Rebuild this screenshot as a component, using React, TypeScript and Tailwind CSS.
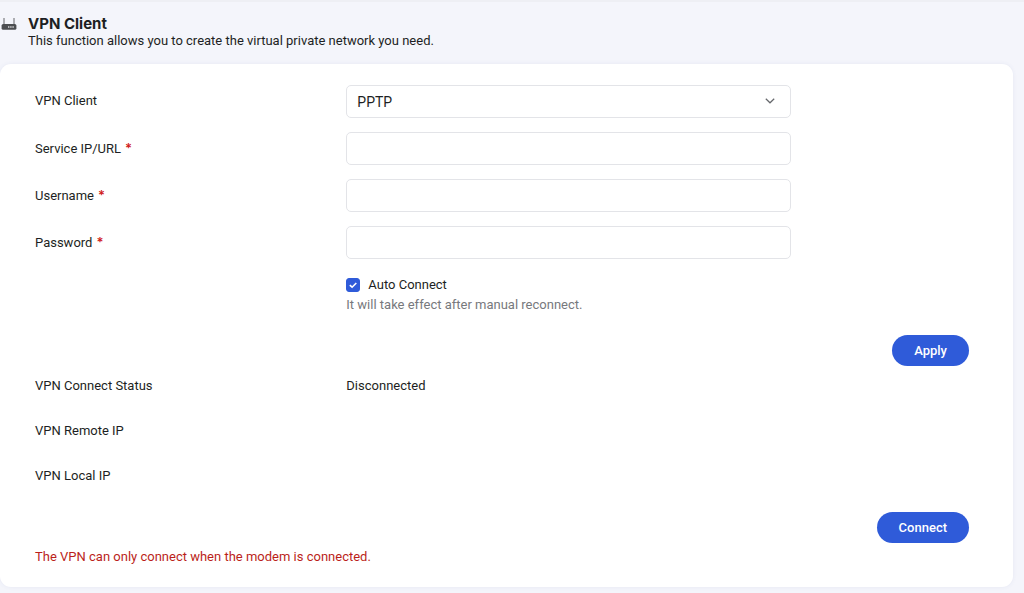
import type { ReactNode } from "react";

const ROW = "grid grid-cols-[7fr_10fr_4fr]";
const FIELD =
  "h-[33px] w-full rounded-[5px] border border-[#e3e4e8] bg-white px-[10px] text-sm text-[#1d1f23] outline-none focus:border-[#2f5bd9]";
const BUTTON =
  "h-[31px] rounded-full bg-[#2f5bd9] px-[22px] text-[13px] font-medium text-white hover:bg-[#274fc0]";

function RouterIcon() {
  return (
    <svg viewBox="0 0 16 14" className="h-[14px] w-4 shrink-0" aria-hidden="true">
      <path d="M3 1V8M13 1V8" stroke="#7c7e82" strokeWidth="1.2" />
      <rect x="0.6" y="7" width="14.8" height="5.8" rx="1.6" fill="#4c4e51" />
      <path d="M7 10H8.4M9.2 10H10.6M11.4 10H12.8" stroke="#d9dadd" strokeWidth="1.3" />
    </svg>
  );
}

function FormRow({
  id,
  label,
  required,
  children,
}: {
  id: string;
  label: string;
  required?: boolean;
  children: ReactNode;
}) {
  return (
    <div className={ROW}>
      <label htmlFor={id} className="pt-[6px]">
        {label}
        {required && <span className="ml-1 font-['Inter'] font-semibold text-[#d0201a]">*</span>}
      </label>
      {children}
    </div>
  );
}

function StatusRow({ label, value }: { label: string; value?: string }) {
  return (
    <div className={ROW}>
      <dt>{label}</dt>
      <dd>{value}</dd>
    </div>
  );
}

export default function App() {
  return (
    <div className="min-h-screen border-t-2 border-[#eeeff4] bg-[#f4f5fb] pr-[11px] pb-[6px] font-['Roboto','Liberation_Sans',sans-serif] text-[13px] leading-5 text-[#1d1f23]">
      <header className="flex gap-[11px] pt-[13px] pb-[15px] pl-px">
        <div className="pt-[2px]">
          <RouterIcon />
        </div>
        <div>
          <h1 className="font-['Inter','Liberation_Sans',sans-serif] text-[15px] leading-[18px] font-bold">
            VPN Client
          </h1>
          <p className="leading-4">
            This function allows you to create the virtual private network you need.
          </p>
        </div>
      </header>

      <main className="rounded-[11px] bg-white pt-[21px] pr-11 pb-5 pl-[35px] shadow-[0_0_4px_rgba(60,80,150,0.08)]">
        <form onSubmit={(e) => e.preventDefault()}>
          <div className="flex flex-col gap-[14px]">
            <FormRow id="vpn-type" label="VPN Client">
              <div className="relative">
                <select id="vpn-type" className={`${FIELD} appearance-none`} defaultValue="PPTP">
                  <option>PPTP</option>
                  <option>L2TP</option>
                </select>
                <svg
                  viewBox="0 0 10 6"
                  className="pointer-events-none absolute top-[13px] right-4 h-[6px] w-[10px]"
                  aria-hidden="true"
                >
                  <path d="M0.8 0.8L5 4.8L9.2 0.8" fill="none" stroke="#66686c" strokeWidth="1.2" />
                </svg>
              </div>
            </FormRow>
            <FormRow id="service" label="Service IP/URL" required>
              <input id="service" type="text" className={FIELD} />
            </FormRow>
            <FormRow id="username" label="Username" required>
              <input id="username" type="text" className={FIELD} />
            </FormRow>
            <FormRow id="password" label="Password" required>
              <input id="password" type="password" className={FIELD} />
            </FormRow>
          </div>
          <div className={`${ROW} mt-4`}>
            <div className="col-start-2">
              <label className="flex items-center gap-2">
                <span className="relative flex">
                  <input
                    type="checkbox"
                    defaultChecked
                    className="peer size-[14px] appearance-none rounded-[3px] border border-[#b9bcc4] checked:border-[#2f5bd9] checked:bg-[#2f5bd9]"
                  />
                  <svg
                    viewBox="0 0 14 14"
                    className="pointer-events-none absolute inset-0 hidden size-[14px] peer-checked:block"
                    aria-hidden="true"
                  >
                    <path d="M3.8 7.1L6.1 9.2L10.3 5" fill="none" stroke="#fff" strokeWidth="1.6" />
                  </svg>
                </span>
                Auto Connect
              </label>
              <p className="text-[#77797d]">It will take effect after manual reconnect.</p>
            </div>
          </div>
          <div className="mt-5 flex justify-end">
            <button type="submit" className={BUTTON}>
              Apply
            </button>
          </div>
        </form>

        <dl className="mt-[10px] flex flex-col gap-[25px]">
          <StatusRow label="VPN Connect Status" value="Disconnected" />
          <StatusRow label="VPN Remote IP" />
          <StatusRow label="VPN Local IP" />
        </dl>
        <div className="mt-[26px] flex justify-end">
          <button type="button" className={BUTTON}>
            Connect
          </button>
        </div>
        <p className="mt-1 text-[#bb1f1a]">
          The VPN can only connect when the modem is connected.
        </p>
      </main>
    </div>
  );
}
